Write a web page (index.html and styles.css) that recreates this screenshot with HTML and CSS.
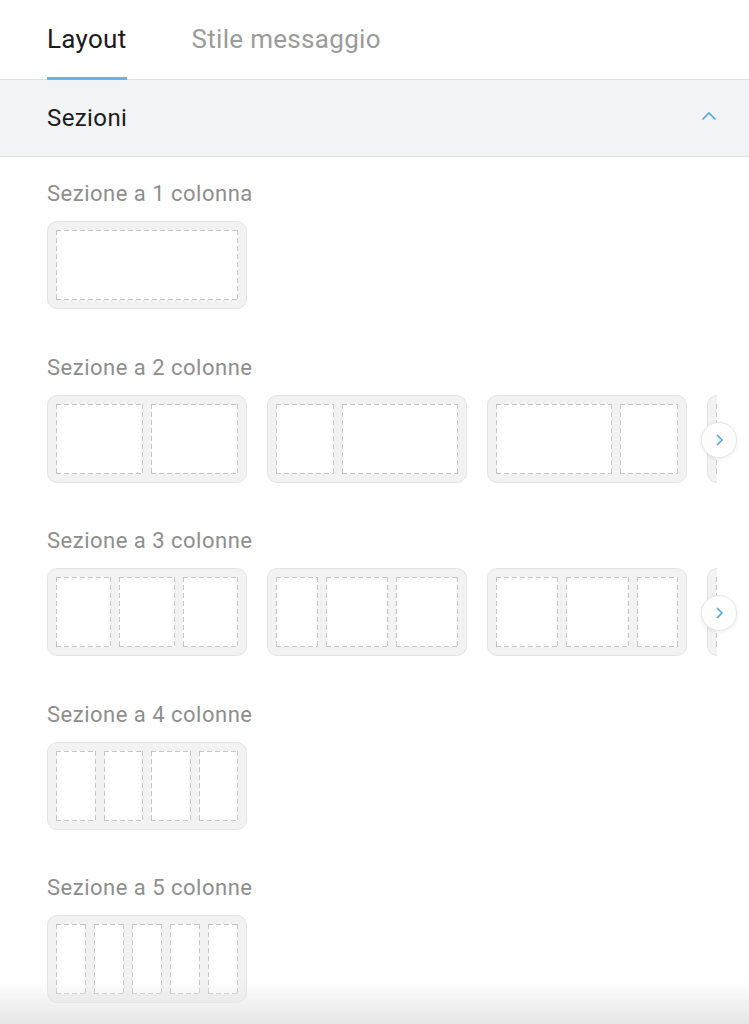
FILE: index.html
```html
<!DOCTYPE html>
<html lang="it">
<head>
  <meta charset="UTF-8">
  <meta name="viewport" content="width=device-width, initial-scale=1.0">
  <title>Layout sezioni</title>
  <link rel="stylesheet" href="styles.css">
</head>
<body>
  <div class="panel">
    <!-- Tabs -->
    <div class="tabs">
      <div class="tab active">Layout</div>
      <div class="tab">Stile messaggio</div>
    </div>

    <div class="group-header">
      <span>Sezioni</span>
      <svg class="collapse" width="16" height="10" viewBox="0 0 16 10"><path d="M1.5 8.5 L8 2 L14.5 8.5" fill="none" stroke="#4fa9e6" stroke-width="1.6"/></svg>
    </div>

    <div class="sections">
      <!-- 1 colonna -->
      <div class="section-type">
        <div class="label">Sezione a 1 colonna</div>
        <div class="row">
          <div class="block"><div class="col f1"></div></div>
        </div>
      </div>

      <!-- 2 colonne -->
      <div class="section-type">
        <div class="label">Sezione a 2 colonne</div>
        <div class="row-wrap">
          <div class="row">
            <div class="block"><div class="col f1"></div><div class="col f1"></div></div>
            <div class="block"><div class="col f1"></div><div class="col f2"></div></div>
            <div class="block"><div class="col f2"></div><div class="col f1"></div></div>
            <div class="block"><div class="col f1"></div><div class="col f1"></div></div>
          </div>
          <div class="scroll-btn">
            <svg width="10" height="14" viewBox="0 0 10 14"><path d="M3 2 L8 7 L3 12" fill="none" stroke="#4fa9e6" stroke-width="1.6"/></svg>
          </div>
        </div>
      </div>

      <!-- 3 colonne -->
      <div class="section-type">
        <div class="label">Sezione a 3 colonne</div>
        <div class="row-wrap">
          <div class="row">
            <div class="block"><div class="col f1"></div><div class="col f1"></div><div class="col f1"></div></div>
            <div class="block"><div class="col f2"></div><div class="col f3"></div><div class="col f3"></div></div>
            <div class="block"><div class="col f3"></div><div class="col f3"></div><div class="col f2"></div></div>
            <div class="block"><div class="col f1"></div><div class="col f1"></div><div class="col f1"></div></div>
          </div>
          <div class="scroll-btn">
            <svg width="10" height="14" viewBox="0 0 10 14"><path d="M3 2 L8 7 L3 12" fill="none" stroke="#4fa9e6" stroke-width="1.6"/></svg>
          </div>
        </div>
      </div>

      <!-- 4 colonne -->
      <div class="section-type">
        <div class="label">Sezione a 4 colonne</div>
        <div class="row">
          <div class="block"><div class="col f1"></div><div class="col f1"></div><div class="col f1"></div><div class="col f1"></div></div>
        </div>
      </div>

      <!-- 5 colonne -->
      <div class="section-type">
        <div class="label">Sezione a 5 colonne</div>
        <div class="row">
          <div class="block"><div class="col f1"></div><div class="col f1"></div><div class="col f1"></div><div class="col f1"></div><div class="col f1"></div></div>
        </div>
      </div>
    </div>
  </div>

  <div class="bottom-fade"></div>
</body>
</html>
```

FILE: styles.css
```css
body {
  font-family: Roboto, "Noto Sans", Arial, sans-serif;
  margin: 0;
  padding: 0;
  background-color: #fff;
  overflow: hidden;
}
.panel {
  width: 749px;
}

/* Tabs */
.tabs {
  display: flex;
  gap: 65px;
  padding: 0 47px;
  height: 79px;
  border-bottom: 1px solid #dfe1e4;
}
.tab {
  font-size: 26px;
  letter-spacing: 0.3px;
  line-height: 79px;
  color: #9b9b9b;
  position: relative;
}
.tab.active {
  color: #1b1b1b;
}
.tab.active::after {
  content: "";
  position: absolute;
  left: 0;
  right: 0;
  bottom: -1px;
  height: 3px;
  background-color: #5cb6f0;
}

/* Group header */
.group-header {
  display: flex;
  align-items: center;
  justify-content: space-between;
  height: 76px;
  padding: 0 32px 0 47px;
  background-color: #f1f3f6;
  border-bottom: 1px solid #dfe1e4;
  font-size: 24px;
  letter-spacing: 0.4px;
  color: #1b1b1b;
}
.collapse {
  margin-top: -4px;
}

/* Section types */
.sections {
  padding: 25px 32px 0 47px;
}
.section-type {
  margin-bottom: 46.5px;
}
.label {
  font-size: 22px;
  line-height: 24px;
  color: #8e8e8e;
  margin-bottom: 15px;
  letter-spacing: 0.5px;
}
.row-wrap {
  position: relative;
}
.row {
  display: flex;
  gap: 20px;
  overflow: hidden;
}
.block {
  flex: 0 0 auto;
  width: 182px;
  height: 70px;
  padding: 8px;
  display: flex;
  gap: 8px;
  background-color: #f2f2f3;
  border: 1px solid #e3e4e6;
  border-radius: 10px;
}
/* dashed outline drawn with gradients for longer dashes */
.col {
  background:
    linear-gradient(to right, #c4c5c7 62%, transparent 0) left top / 8px 1px repeat-x,
    linear-gradient(to right, #c4c5c7 62%, transparent 0) left bottom / 8px 1px repeat-x,
    linear-gradient(to bottom, #c4c5c7 62%, transparent 0) left top / 1px 8px repeat-y,
    linear-gradient(to bottom, #c4c5c7 62%, transparent 0) right top / 1px 8px repeat-y,
    #fff;
}
.f1 { flex: 1; }
.f2 { flex: 2; }
.f3 { flex: 3; }

.scroll-btn {
  position: absolute;
  right: -20px;
  top: 27px;
  width: 34px;
  height: 34px;
  border-radius: 50%;
  background-color: #fff;
  border: 1px solid #e6e7e9;
  box-shadow: 0 1px 4px rgba(0, 0, 0, 0.08);
  display: flex;
  align-items: center;
  justify-content: center;
}

.bottom-fade {
  position: fixed;
  left: 0;
  right: 0;
  bottom: 0;
  height: 44px;
  background: linear-gradient(to bottom, rgba(232, 232, 232, 0), #e6e6e6);
}
```
